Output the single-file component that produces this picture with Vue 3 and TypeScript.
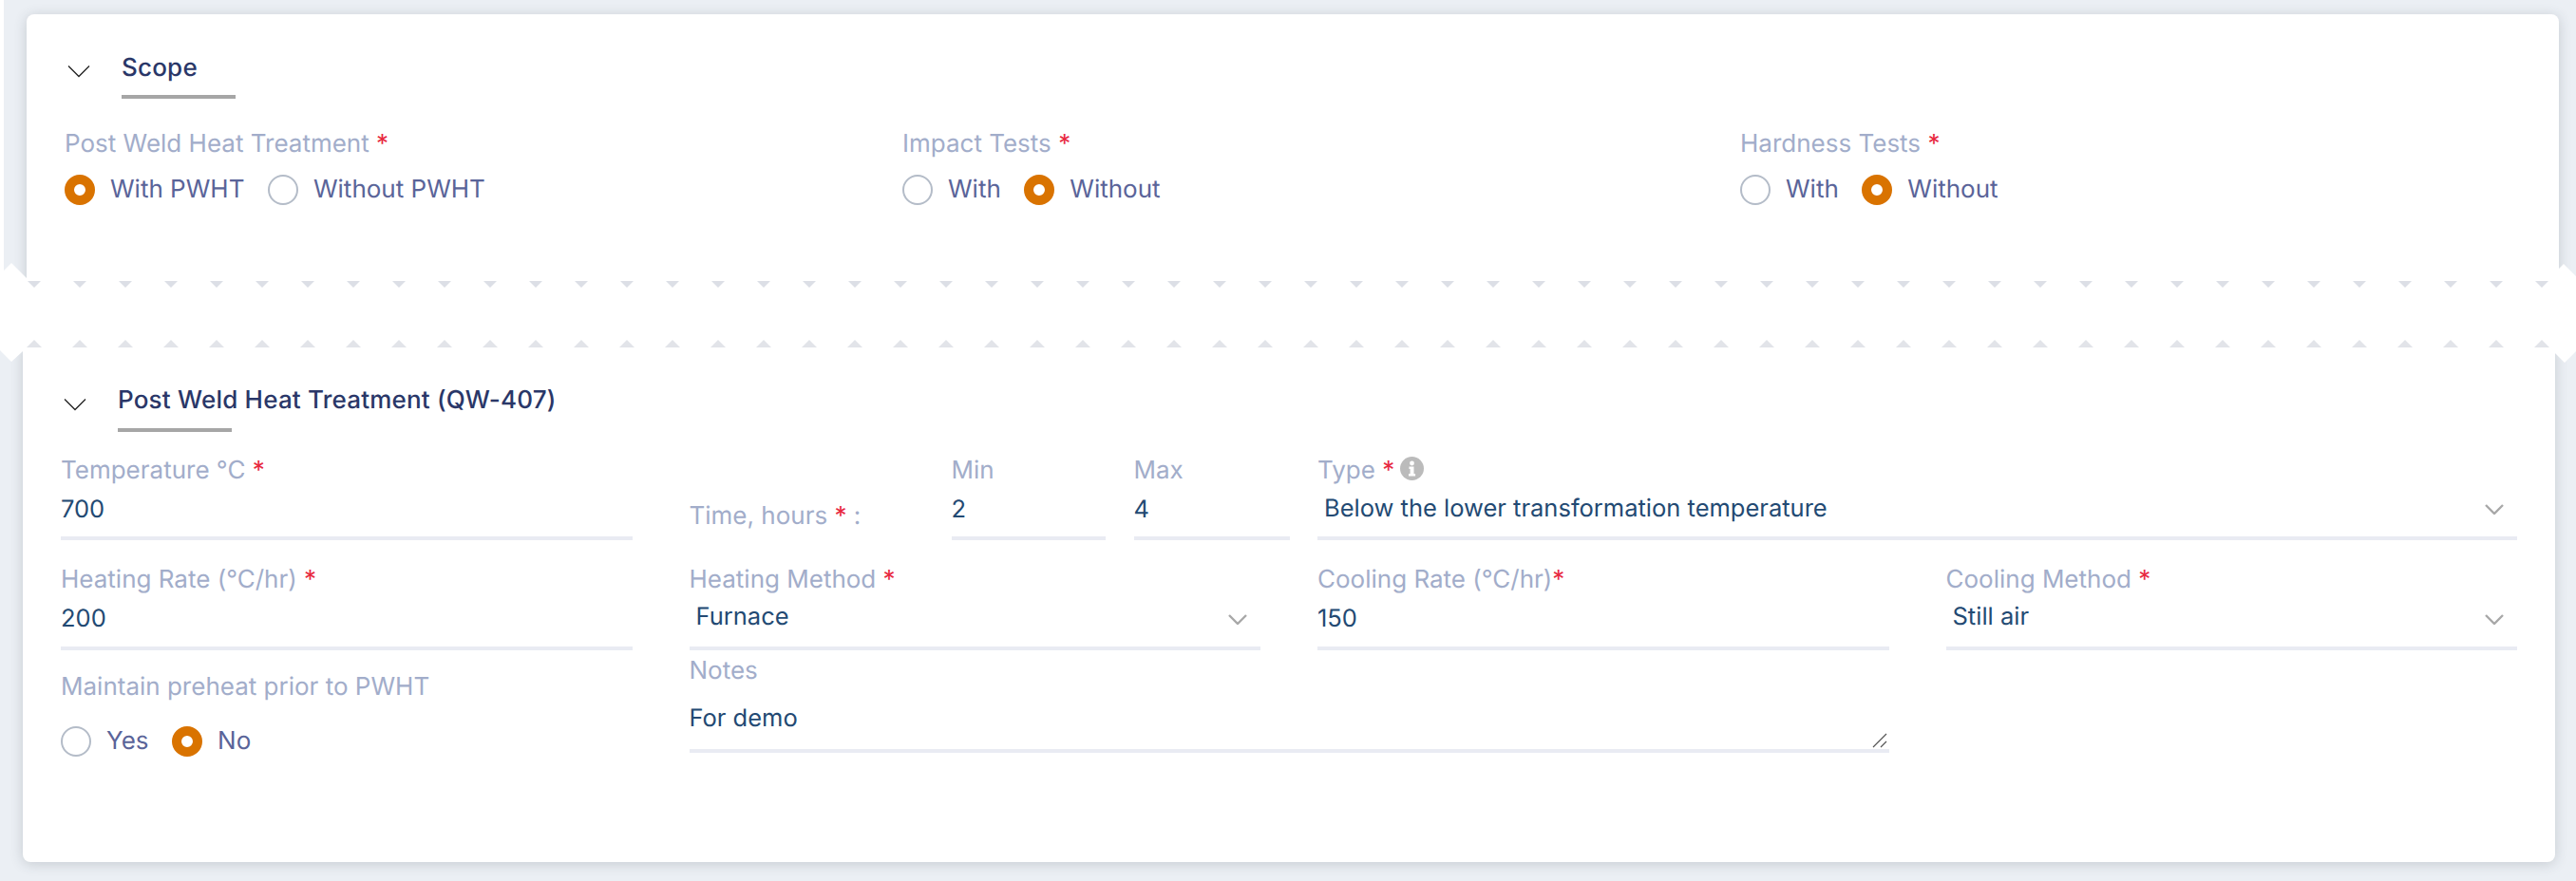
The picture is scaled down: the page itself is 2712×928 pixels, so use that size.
<script setup lang="ts">
const topTicks: number[] = Array.from({ length: 56 }, (_, i) => 36 + 48 * i)

interface Radio {
  text: string
  on: boolean
}
interface Group {
  label: string
  options: Radio[]
}
const scope: Group[] = [
  { label: 'Post Weld Heat Treatment', options: [{ text: 'With PWHT', on: true }, { text: 'Without PWHT', on: false }] },
  { label: 'Impact Tests', options: [{ text: 'With', on: false }, { text: 'Without', on: true }] },
  { label: 'Hardness Tests', options: [{ text: 'With', on: false }, { text: 'Without', on: true }] },
]
const preheat: Radio[] = [{ text: 'Yes', on: false }, { text: 'No', on: true }]
</script>

<template>
  <div class="page">
    <section class="strip">
      <div class="card first">
        <header class="head">
          <span class="toggle">
            <svg width="24" height="14" viewBox="0 0 24 14"><path d="M1 1.500 12 12.500 23 1.500" fill="none" stroke="#222" stroke-width="1.300" /></svg>
          </span>
          <div>
            <h2 class="title">Scope</h2>
            <div class="rule"></div>
          </div>
        </header>
        <div class="scope-grid">
          <div v-for="g in scope" :key="g.label">
            <div class="label">{{ g.label }} <span class="req">*</span></div>
            <div class="radios">
              <div v-for="o in g.options" :key="o.text" class="radio">
                <span class="dot" :class="{ on: o.on }"></span>
                <span>{{ o.text }}</span>
              </div>
            </div>
          </div>
        </div>
      </div>
    </section>

    <section class="card second">
      <header class="head">
        <span class="toggle">
          <svg width="24" height="14" viewBox="0 0 24 14"><path d="M1 1.500 12 12.500 23 1.500" fill="none" stroke="#222" stroke-width="1.300" /></svg>
        </span>
        <div>
          <h2 class="title">Post Weld Heat Treatment (QW-407)</h2>
          <div class="rule"></div>
        </div>
      </header>

      <div class="form">
        <div class="field top-row">
          <div class="label">Temperature °C <span class="req">*</span></div>
          <div class="control">700</div>
        </div>

        <div class="time">
          <div class="time-label">Time, hours <span class="req">*</span> :</div>
          <div class="field min top-row">
            <div class="label">Min</div>
            <div class="control">2</div>
          </div>
          <div class="field max top-row">
            <div class="label">Max</div>
            <div class="control">4</div>
          </div>
        </div>

        <div class="field wide top-row">
          <div class="label">
            Type <span class="req">*</span>
            <svg class="info" width="25" height="25" viewBox="0 0 25 25">
              <circle cx="12.500" cy="12.500" r="12.500" fill="#bbbbbb" />
              <circle cx="12.500" cy="7" r="2.400" fill="#fff" />
              <path d="M9.500 10.500h5v7.500h1.600v2.400H9v-2.400h1.600v-5.100H9.500z" fill="#fff" />
            </svg>
          </div>
          <div class="control select">
            Below the lower transformation temperature
            <svg class="caret" width="20" height="11" viewBox="0 0 20 11"><path d="M1 1l9 9 9-9" fill="none" stroke="#a8a8a8" stroke-width="2.400" /></svg>
          </div>
        </div>

        <div class="field">
          <div class="label">Heating Rate (°C/hr) <span class="req">*</span></div>
          <div class="control low">200</div>
        </div>
        <div class="field">
          <div class="label">Heating Method <span class="req">*</span></div>
          <div class="control low select">
            Furnace
            <svg class="caret" width="20" height="11" viewBox="0 0 20 11"><path d="M1 1l9 9 9-9" fill="none" stroke="#a8a8a8" stroke-width="2.400" /></svg>
          </div>
        </div>
        <div class="field">
          <div class="label">Cooling Rate (°C/hr)<span class="req">*</span></div>
          <div class="control low">150</div>
        </div>
        <div class="field">
          <div class="label">Cooling Method <span class="req">*</span></div>
          <div class="control low select">
            Still air
            <svg class="caret" width="20" height="11" viewBox="0 0 20 11"><path d="M1 1l9 9 9-9" fill="none" stroke="#a8a8a8" stroke-width="2.400" /></svg>
          </div>
        </div>

        <div class="preheat">
          <div class="label">Maintain preheat prior to PWHT</div>
          <div class="radios">
            <div v-for="o in preheat" :key="o.text" class="radio">
              <span class="dot" :class="{ on: o.on }"></span>
              <span>{{ o.text }}</span>
            </div>
          </div>
        </div>
        <div class="field notes">
          <div class="label">Notes</div>
          <div class="control area">
            For demo
            <svg class="grip" width="16" height="16" viewBox="0 0 16 16"><path d="M1 15 15 1M9 15l6-6" fill="none" stroke="#555" stroke-width="1.200" /></svg>
          </div>
        </div>
      </div>
    </section>

    <svg class="tear" width="2712" height="106" viewBox="0 277 2712 106">
      <polygon points="0,289 12,277 28,293 2684,293 2699,278 2712,291 2712,370 2700,382 2688,370 24,370 12,381 0,369" fill="#fff" />
      <polygon v-for="x in topTicks" :key="'t' + x" :points="`${x - 7},296 ${x + 7},296 ${x},303`" fill="#dcdfe6" />
      <polygon v-for="x in topTicks" :key="'b' + x" :points="`${x - 8},366 ${x + 8},366 ${x},358`" fill="#e2e4e9" />
    </svg>
  </div>
</template>

<style scoped>
.page {
  position: relative;
  height: 928px;
  background: #ebeff4;
  font-family: Inter, "Liberation Sans", sans-serif;
  font-size: 26px;
  line-height: 36px;
  text-rendering: geometricPrecision;
  overflow: hidden;
}
.strip {
  border-left: 4px solid #fff;
  padding: 15px 18px 0 24px;
  height: 320px;
  box-sizing: border-box;
}
.card {
  background: #fff;
  border-radius: 8px;
  box-shadow: 0 2px 14px rgba(50, 60, 70, 0.2);
  box-sizing: border-box;
}
.first {
  height: 305px;
  padding: 39px 40px 0;
}
.second {
  margin: 40px 22px 0 24px;
  height: 548px;
  padding: 44px 40px 0;
}
.head {
  display: flex;
}
.toggle {
  flex: none;
  width: 60px;
  padding: 15px 0 0 3px;
  box-sizing: border-box;
}
.first .toggle {
  padding-top: 14px;
}
.toggle svg {
  display: block;
}
.title {
  margin: 0;
  font-size: 26px;
  line-height: 36px;
  font-weight: 500;
  letter-spacing: 0.2px;
  color: #2a3768;
}
.rule {
  width: 120px;
  height: 4px;
  margin-top: 11px;
  background: #a6a6a6;
}
.first .rule {
  margin-top: 10px;
}
.scope-grid {
  display: grid;
  grid-template-columns: repeat(3, 882px);
  margin-top: 30px;
}
.label {
  color: #a2adca;
  height: 36px;
  box-sizing: border-box;
  white-space: nowrap;
}
.top-row .label {
  padding-top: 1px;
}
.req {
  color: #e8293f;
}
.radios {
  display: flex;
  gap: 24.5px;
  margin-top: 14px;
  color: #5a6499;
}
.radio {
  display: flex;
  align-items: center;
  gap: 16px;
  height: 32px;
}
.dot {
  width: 32px;
  height: 32px;
  box-sizing: border-box;
  border-radius: 50%;
  border: 2px solid #b4bcc8;
  background: #fff;
}
.dot.on {
  border: 10px solid #d97300;
}
.form {
  display: grid;
  grid-template-columns: repeat(4, 601.5px);
  column-gap: 60px;
  row-gap: 24px;
  margin-top: 22px;
}
.control {
  position: relative;
  height: 56px;
  box-sizing: border-box;
  padding-top: 6px;
  border-bottom: 4px solid #e9ebf3;
  font-size: 25.5px;
  color: #234a73;
  white-space: nowrap;
}
.low {
  padding-top: 5px;
}
.select {
  padding-top: 5px;
  padding-left: 7px;
}
.select.low {
  padding-top: 3px;
}
.caret {
  position: absolute;
  right: 14px;
  top: 18px;
}
.time {
  display: flex;
  margin-right: -31px;
}
.time-label {
  width: 276px;
  flex: none;
  padding-top: 49px;
  color: #a2adca;
}
.min {
  width: 162px;
  flex: none;
}
.max {
  width: 164px;
  flex: none;
  margin-left: 30px;
}
.wide {
  grid-column: 3 / 5;
}
.info {
  vertical-align: -2px;
  margin-left: 6px;
}
.preheat {
  margin-top: -3px;
}
.preheat .radios {
  margin-top: 23px;
}
.notes {
  grid-column: 2 / 4;
  margin-top: -20px;
}
.area {
  height: 68px;
  padding-top: 14px;
}
.grip {
  position: absolute;
  right: 2px;
  bottom: 1px;
}
.tear {
  position: absolute;
  left: 0;
  top: 277px;
  display: block;
}
</style>
